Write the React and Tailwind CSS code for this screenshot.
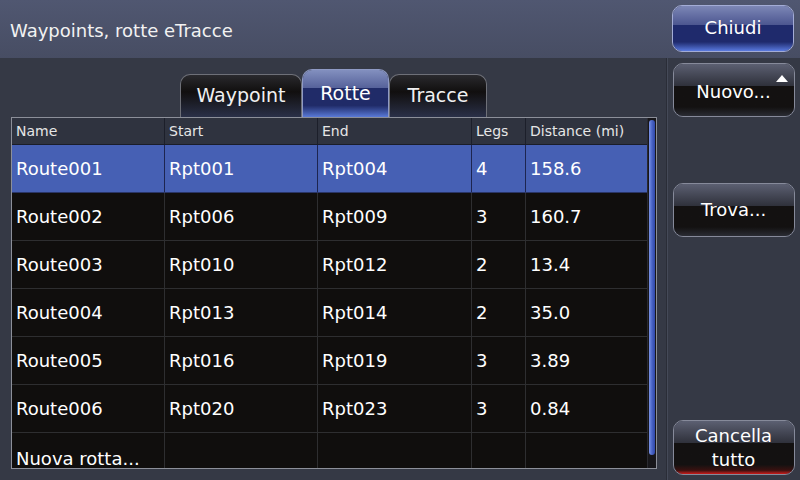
import React from "react";

const rows = [
  ["Route001", "Rpt001", "Rpt004", "4", "158.6"],
  ["Route002", "Rpt006", "Rpt009", "3", "160.7"],
  ["Route003", "Rpt010", "Rpt012", "2", "13.4"],
  ["Route004", "Rpt013", "Rpt014", "2", "35.0"],
  ["Route005", "Rpt016", "Rpt019", "3", "3.89"],
  ["Route006", "Rpt020", "Rpt023", "3", "0.84"],
];

const cols = "grid grid-cols-[153px_153px_154px_54px_121px]";

function DarkButton({ children, className = "", glow = "from-[#2a2c34]" }) {
  return (
    <button
      className={
        "relative w-[122px] overflow-hidden rounded-[10px] border border-[#868a9a] text-white text-[18px] leading-[24px] " +
        className
      }
    >
      <div className="absolute inset-0 flex flex-col">
        <div className="h-[42%] bg-gradient-to-b from-[#5c6072] to-[#2f313b]" />
        <div className={"flex-1 bg-gradient-to-t to-[#131111] to-[30%] " + glow} />
      </div>
      <span className="relative">{children}</span>
    </button>
  );
}

export default function App() {
  return (
    <div className="w-[800px] h-[480px] flex flex-col bg-[#353945] font-['DejaVu_Sans',sans-serif] overflow-hidden">
      {/* header */}
      <div className="h-[58px] flex items-center justify-between bg-gradient-to-b from-[#505771] to-[#474d63] pl-[10px] pr-[6px]">
        <div className="text-[18px] text-[#f2f2f2] mt-[2px]">Waypoints, rotte eTracce</div>
        <button className="relative w-[122px] h-[47px] -mt-[1px] overflow-hidden rounded-[10px] border border-[#a3acd6] text-white text-[18px]">
          <div className="absolute inset-0 flex flex-col">
            <div className="h-[42%] bg-gradient-to-b from-[#7d87b6] to-[#4c5690]" />
            <div className="flex-1 bg-gradient-to-t from-[#5a7ae0] to-[#1f2a6c] to-[35%]" />
          </div>
          <span className="relative block -mt-[3px]">Chiudi</span>
        </button>
      </div>

      <div className="flex flex-1">
        {/* left content */}
        <div className="w-[666px] flex flex-col pl-[11px] pr-[9px]">
          {/* tabs */}
          <div className="flex items-end pl-[169px] h-[59px]">
            <div className="w-[122px] h-[43px] rounded-t-[10px] border border-b-0 border-[#6e7078] bg-gradient-to-b from-[#2a2a2e] via-[#110f0f] via-[40%] to-[#2a3048] flex items-center justify-center text-[19px] text-[#f0f0f0] pb-[1px]">
              Waypoint
            </div>
            <div className="w-[87px] h-[48px] rounded-t-[10px] border border-b-0 border-[#8f9ac4] flex flex-col overflow-hidden relative">
              <div className="absolute inset-0 flex flex-col">
                <div className="h-[38%] bg-gradient-to-b from-[#8390bf] to-[#56629a]" />
                <div className="flex-1 bg-gradient-to-t from-[#5a7ad8] to-[#202b68] to-[40%]" />
              </div>
              <div className="relative flex-1 flex items-center justify-center text-[19px] text-white -mt-[1px]">
                Rotte
              </div>
            </div>
            <div className="w-[98px] h-[43px] rounded-t-[10px] border border-b-0 border-[#6e7078] bg-gradient-to-b from-[#2a2a2e] via-[#110f0f] via-[40%] to-[#2a3048] flex items-center justify-center text-[19px] text-[#f0f0f0] pb-[1px]">
              Tracce
            </div>
          </div>

          {/* table */}
          <div className="h-[352px] border border-[#8c8f99] flex overflow-hidden bg-[#100e0d]">
            <div className="w-[635px] flex flex-col">
              <div className={cols + " h-[27px] shrink-0 bg-[#2f333f] border-b border-[#1a1d28] text-[14px] text-[#e6e6e6]"}>
                {["Name", "Start", "End", "Legs", "Distance (mi)"].map((h, i) => (
                  <div key={h} className={"flex items-center pl-[4px] " + (i < 4 ? "border-r border-[#1c1f2a]" : "")}>
                    {h}
                  </div>
                ))}
              </div>
              {rows.map((r, ri) => (
                <div
                  key={r[0]}
                  className={
                    cols +
                    " h-[48px] shrink-0 text-[18px] text-white border-b " +
                    (ri === 0 ? "bg-[#4660b4] border-[#2a3566]" : "border-[#2e2e30]")
                  }
                >
                  {r.map((c, i) => (
                    <div
                      key={i}
                      className={
                        "flex items-center pl-[4px] " +
                        (i < 4 ? "border-r " + (ri === 0 ? "border-[#1d2550]" : "border-[#2e2e30]") : "")
                      }
                    >
                      {c}
                    </div>
                  ))}
                </div>
              ))}
              <div className={cols + " h-[48px] shrink-0 text-[18px] text-white"}>
                {["Nuova rotta...", "", "", "", ""].map((c, i) => (
                  <div key={i} className={"flex items-start pt-[12px] pl-[4px] " + (i < 4 ? "border-r border-[#2e2e30]" : "")}>
                    {c}
                  </div>
                ))}
              </div>
            </div>
            {/* scrollbar */}
            <div className="w-[10px] bg-[#17161a] border-l border-[#2a2a30] flex justify-center pt-[2px] pb-[12px]">
              <div className="w-[6px] h-[335px] rounded-full bg-gradient-to-r from-[#7b93e6] via-[#4a64c6] to-[#2f47a8]" />
            </div>
          </div>
        </div>

        {/* right panel */}
        <div className="flex-1 border-l border-[#2a2d37] shadow-[inset_1px_0_0_#454a58] flex flex-col items-center pt-[5px] pb-[5px]">
          <DarkButton className="h-[54px]">
            <span className="block mt-[4px]">Nuovo...</span>
            <svg className="absolute right-[6px] top-[-1px]" width="12" height="8" viewBox="0 0 12 8">
              <polygon points="6,0 12,7 0,7" fill="#ffffff" />
            </svg>
          </DarkButton>
          <DarkButton className="h-[54px] mt-[66px]">
            <span className="block mt-[-1px]">Trova...</span>
          </DarkButton>
          <div className="flex-1" />
          <DarkButton className="h-[55px] leading-[24px]" glow="from-[#d01818] via-[#3a1010] via-[12%]">
            <span className="block">Cancella<br />tutto</span>
          </DarkButton>
        </div>
      </div>
    </div>
  );
}
